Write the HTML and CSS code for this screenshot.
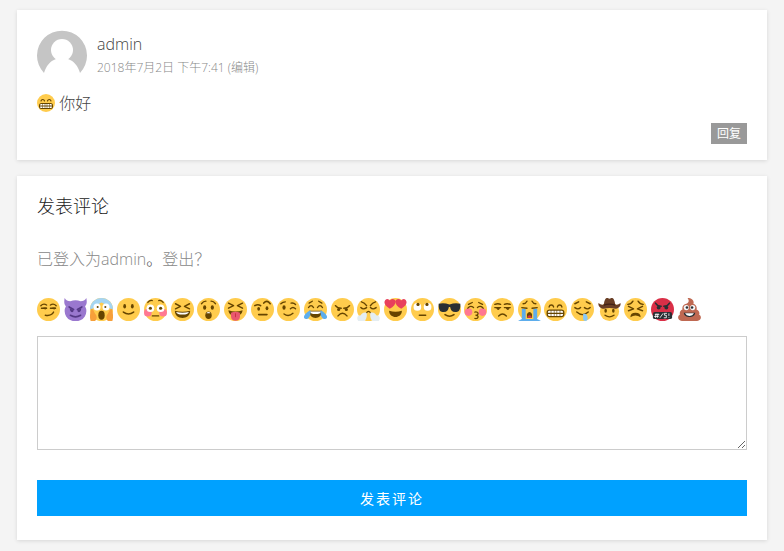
FILE: index.html
```html
<!DOCTYPE html>
<html lang="zh-CN">
<head>
  <meta charset="UTF-8" />
  <meta name="viewport" content="width=device-width, initial-scale=1.0" />
  <title>发表评论</title>
  <link rel="stylesheet" href="styles.css">
</head>
<body>
  <!-- Shared shapes -->
  <svg class="defs" aria-hidden="true">
    <symbol id="face" viewBox="0 0 36 36"><circle cx="18" cy="18" r="18" fill="#ffcc4d"/></symbol>
    <symbol id="grin" viewBox="0 0 36 36">
      <circle cx="18" cy="18" r="18" fill="#ffcc4d"/>
      <path d="M8 14c1-4 6-4 7 0M21 14c1-4 6-4 7 0" fill="none" stroke="#664500" stroke-width="2.2" stroke-linecap="round"/>
      <rect x="4" y="18" width="28" height="12" rx="5" fill="#664500"/>
      <path d="M8 20h20q2 0 2 3H6q0-3 2-3zM6 25h24q0 3-2 3H8q-2 0-2-3z" fill="#fff"/>
      <path d="M11 19v10M16 19v10M20 19v10M25 19v10" stroke="#664500" stroke-width="1"/>
    </symbol>
  </svg>

  <main class="content">
    <article class="card comment">
      <div class="comment-head">
        <svg class="avatar" viewBox="0 0 50 50" role="img" aria-label="admin">
          <path d="M7 43A25 25 0 1 1 43 43C41 36 37 31 31 29H19C13 31 9 36 7 43z" fill="#c5c5c5"/>
          <circle cx="25" cy="20" r="11" fill="#fff"/>
        </svg>
        <div class="comment-meta">
          <div class="author">admin</div>
          <div class="date"><time datetime="2018-07-02T19:41">2018年7月2日 下午7:41</time> <a href="#edit">(编辑)</a></div>
        </div>
      </div>
      <p class="comment-text"><svg class="emoji-inline" viewBox="0 0 36 36"><use href="#grin"/></svg> 你好</p>
      <div class="comment-actions"><a class="reply" href="#respond">回复</a></div>
    </article>

    <section class="card respond" id="respond">
      <h3>发表评论</h3>
      <form>
        <p class="logged-in"><a href="#profile">已登入为admin</a>。<a href="#logout">登出？</a></p>

        <div class="smilies">
          <button type="button" aria-label="smirk"><svg viewBox="0 0 36 36"><use href="#face"/><g fill="none" stroke="#664500" stroke-width="2.2" stroke-linecap="round"><path d="M6 12c3-3 6-3 9-1M21 11c3-2 6-2 9 1M7 16h8M21 16h8M13 27c6 1 11-1 13-5"/></g><path d="M10 15h5c0 4-4 4-5 0zM24 15h5c0 4-4 4-5 0z" fill="#664500"/></svg></button>
          <button type="button" aria-label="devil"><svg viewBox="0 0 36 36"><path d="M1 0c-1 6-1 10 2 13a17 16 0 1 0 30 0c3-3 3-7 2-13-2 4-5 5-9 5-5-2-11-2-16 0-4 0-7-1-9-5z" fill="#9a78cf"/><path d="M8 14l7 4M28 14l-7 4M10 27q8 5 16 0" fill="none" stroke="#553986" stroke-width="2.5" stroke-linecap="round"/><path d="M9 16l6 3c0 5-6 4-6-3zM27 16l-6 3c0 5 6 4 6-3z" fill="#553986"/></svg></button>
          <button type="button" aria-label="scream"><svg viewBox="0 0 36 36"><use href="#face"/><path d="M0 18a18 18 0 0 1 36 0c-8-2-11-8-18-11C11 10 8 16 0 18z" fill="#a5d5f2"/><circle cx="11" cy="14" r="5.5" fill="#fff"/><circle cx="25" cy="14" r="5.5" fill="#fff"/><circle cx="12" cy="14" r="1.6" fill="#664500"/><circle cx="24" cy="14" r="1.6" fill="#664500"/><ellipse cx="18" cy="27" rx="5" ry="7" fill="#664500"/><path d="M2 17c4 0 4 6 7 9 3 4 1 8-1 10H1c-2-6-1-13 1-19zM34 17c-4 0-4 6-7 9-3 4-1 8 1 10h7c2-6 1-13-1-19z" fill="#f7a03a"/></svg></button>
          <button type="button" aria-label="smile"><svg viewBox="0 0 36 36"><use href="#face"/><ellipse cx="12" cy="13" rx="2.2" ry="3.5" fill="#664500"/><ellipse cx="24" cy="13" rx="2.2" ry="3.5" fill="#664500"/><path d="M10 22q8 6 16 0" fill="none" stroke="#664500" stroke-width="2.5" stroke-linecap="round"/></svg></button>
          <button type="button" aria-label="flushed"><svg viewBox="0 0 36 36"><use href="#face"/><circle cx="6" cy="23" r="6" fill="#ff7892"/><circle cx="30" cy="23" r="6" fill="#ff7892"/><circle cx="10" cy="16" r="6" fill="#fff"/><circle cx="26" cy="16" r="6" fill="#fff"/><circle cx="10" cy="16" r="2.5" fill="#664500"/><circle cx="26" cy="16" r="2.5" fill="#664500"/><path d="M6 7q3-4 7-3M30 7q-3-4-7-3M13 28h10" fill="none" stroke="#664500" stroke-width="2" stroke-linecap="round"/></svg></button>
          <button type="button" aria-label="laughing"><svg viewBox="0 0 36 36"><use href="#face"/><path d="M7 9l8 4-8 4M29 9l-8 4 8 4" fill="none" stroke="#664500" stroke-width="2.2" stroke-linecap="round" stroke-linejoin="round"/><path d="M6 20q12 3 24 0c0 15-24 15-24 0z" fill="#664500"/><path d="M8 22q10 2 20 0-1 4-10 4T8 22z" fill="#fff"/></svg></button>
          <button type="button" aria-label="astonished"><svg viewBox="0 0 36 36"><use href="#face"/><ellipse cx="12" cy="15" rx="2.5" ry="3.5" fill="#664500"/><ellipse cx="24" cy="15" rx="2.5" ry="3.5" fill="#664500"/><path d="M7 9q3-4 7-4M29 9q-3-4-7-4" fill="none" stroke="#664500" stroke-width="2" stroke-linecap="round"/><ellipse cx="18" cy="27" rx="5" ry="6" fill="#664500"/><path d="M14.5 24q3.5-4 7 0z" fill="#fff"/></svg></button>
          <button type="button" aria-label="tongue"><svg viewBox="0 0 36 36"><use href="#face"/><path d="M7 8l8 4-8 4M29 8l-8 4 8 4" fill="none" stroke="#664500" stroke-width="2.2" stroke-linecap="round" stroke-linejoin="round"/><path d="M7 19q11 4 22 0c0 12-22 12-22 0z" fill="#664500"/><path d="M11 23q7-3 14 0v6c0 9-14 9-14 0z" fill="#e8596e"/><path d="M18 24v6" stroke="#be1931"/></svg></button>
          <button type="button" aria-label="raised eyebrow"><svg viewBox="0 0 36 36"><use href="#face"/><ellipse cx="12" cy="17" rx="2.2" ry="3" fill="#664500"/><ellipse cx="25" cy="16" rx="2.2" ry="3" fill="#664500"/><path d="M6 12q5-3 9 0M20 8q5-6 10 1M12 26h13" fill="none" stroke="#664500" stroke-width="2.5" stroke-linecap="round"/></svg></button>
          <button type="button" aria-label="wink"><svg viewBox="0 0 36 36"><use href="#face"/><ellipse cx="11" cy="15" rx="2.5" ry="3.5" fill="#664500"/><path d="M6 9q3-3 7-3M22 8q4-1 7 2M21 17q4-4 8 0M11 25q7 5 14-1" fill="none" stroke="#664500" stroke-width="2.2" stroke-linecap="round"/></svg></button>
          <button type="button" aria-label="joy"><svg viewBox="0 0 36 36"><use href="#face"/><path d="M7 15q4-6 8 0M21 15q4-6 8 0M8 8l5-3M28 8l-5-3" fill="none" stroke="#664500" stroke-width="2" stroke-linecap="round"/><path d="M8 20h20c0 15-20 15-20 0z" fill="#664500"/><path d="M9 21h18q-1 4-9 4t-9-4z" fill="#fff"/><path d="M10 19c1 9-2 14-7 14-6-1-3-9 7-14zM26 19c-1 9 2 14 7 14 6-1 3-9-7-14z" fill="#5dadec"/></svg></button>
          <button type="button" aria-label="angry"><svg viewBox="0 0 36 36"><use href="#face"/><path d="M7 12q3 4 9 4M29 12q-3 4-9 4M11 28q7-8 14 0" fill="none" stroke="#664500" stroke-width="2.3" stroke-linecap="round"/><circle cx="12" cy="18" r="2.5" fill="#664500"/><circle cx="24" cy="18" r="2.5" fill="#664500"/></svg></button>
          <button type="button" aria-label="triumph"><svg viewBox="0 0 36 36"><use href="#face"/><path d="M7 6q5 1 8 6M29 6q-5 1-8 6M6 15q4 4 9 0M21 15q4 4 9 0M15 23q3-4 6 0" fill="none" stroke="#664500" stroke-width="2.2" stroke-linecap="round"/><path d="M15 23c-6-1-8 2-9 4-6 0-7 5-4 9h10c3-3 4-8 3-13zM21 23c6-1 8 2 9 4 6 0 7 5 4 9H24c-3-3-4-8-3-13z" fill="#e4edf2"/></svg></button>
          <button type="button" aria-label="heart eyes"><svg viewBox="0 0 36 36"><use href="#face"/><path d="M9 17C1 12-1 7 2 3c3-3 6-1 7 1 3-4 9-3 9 2 0 4-3 8-9 11zM27 17c8-5 10-10 7-14-3-3-6-1-7 1-3-4-9-3-9 2 0 4 3 8 9 11z" fill="#e8405c"/><path d="M8 20q10 3 20 0c0 13-20 13-20 0z" fill="#664500"/></svg></button>
          <button type="button" aria-label="rolling eyes"><svg viewBox="0 0 36 36"><use href="#face"/><circle cx="10" cy="14" r="6" fill="#fff"/><circle cx="26" cy="14" r="6" fill="#fff"/><circle cx="11" cy="10" r="2.5" fill="#664500"/><circle cx="25" cy="10" r="2.5" fill="#664500"/><path d="M13 27h10" stroke="#664500" stroke-width="2.2" stroke-linecap="round"/></svg></button>
          <button type="button" aria-label="sunglasses"><svg viewBox="0 0 36 36"><use href="#face"/><path d="M1 9q8-2 17 1 9-3 17-1v4c-1 8-3 9-8 9-5 0-7-3-8-8h-2c-1 5-3 8-8 8-5 0-7-1-8-9z" fill="#292f33"/><path d="M11 26q7 5 14 0" fill="none" stroke="#664500" stroke-width="2.5" stroke-linecap="round"/></svg></button>
          <button type="button" aria-label="kissing"><svg viewBox="0 0 36 36"><use href="#face"/><circle cx="7" cy="22" r="6" fill="#ff7892"/><circle cx="29" cy="22" r="6" fill="#ff7892"/><path d="M6 16q4-5 9-1M21 15q5-4 9 1M7 10l6-3M29 10l-6-3M17 22c7-1 6 5 1 5 6 0 5 6-1 5" fill="none" stroke="#664500" stroke-width="2" stroke-linecap="round"/></svg></button>
          <button type="button" aria-label="unamused"><svg viewBox="0 0 36 36"><use href="#face"/><path d="M6 10q5-2 9 0M21 10q4-2 9 0M6 15h9M21 15h9M12 28q6-6 12 0" fill="none" stroke="#664500" stroke-width="2.2" stroke-linecap="round"/><path d="M8 15h6c0 5-5 5-6 0zM23 15h6c0 5-5 5-6 0z" fill="#664500"/></svg></button>
          <button type="button" aria-label="sob"><svg viewBox="0 0 36 36"><use href="#face"/><path d="M6 17h6v16h12V17h6v16l6 3H0l6-3z" fill="#5dadec"/><path d="M8 9q4 0 6-4M28 9q-4 0-6-4M6 15l8 1M30 15l-8 1" fill="none" stroke="#664500" stroke-width="2.2" stroke-linecap="round"/><path d="M14 25q4-6 8 0v6h-8z" fill="#664500"/><path d="M15 29q3-4 6 0v2h-6z" fill="#dd2e44"/></svg></button>
          <button type="button" aria-label="grin"><svg viewBox="0 0 36 36"><use href="#grin"/></svg></button>
          <button type="button" aria-label="drooling"><svg viewBox="0 0 36 36"><use href="#face"/><path d="M6 9l6-3M30 9l-6-3M6 15q5 4 9 0M21 15q5 4 9 0M9 22q9 8 18 0" fill="none" stroke="#664500" stroke-width="2.2" stroke-linecap="round"/><path d="M19 25c4-1 7 1 7 8 0 4-7 4-7 0z" fill="#88c9f9"/></svg></button>
          <button type="button" aria-label="cowboy"><svg viewBox="0 0 36 36"><circle cx="18" cy="21" r="15" fill="#ffcc4d"/><ellipse cx="12" cy="20" rx="2" ry="3" fill="#664500"/><ellipse cx="24" cy="20" rx="2" ry="3" fill="#664500"/><path d="M11 27q7 5 14 0" fill="none" stroke="#664500" stroke-width="2.2" stroke-linecap="round"/><path d="M1 8c3 3 6 3 8 2 1-7 3-10 5-10 2 0 2 1 4 1s2-1 4-1c2 0 4 3 5 10 2 1 5 1 8-2 2 4-4 9-8 9-6-2-12-2-18 0-4 0-10-5-8-9z" fill="#693e25"/><path d="M9 11q9-3 18 0" fill="none" stroke="#402116" stroke-width="2"/></svg></button>
          <button type="button" aria-label="persevere"><svg viewBox="0 0 36 36"><use href="#face"/><path d="M6 10q5 0 8-5M30 10q-5 0-8-5M7 13l8 4-8 3M29 13l-8 4 8 3" fill="none" stroke="#664500" stroke-width="2.2" stroke-linecap="round" stroke-linejoin="round"/><path d="M10 30q0-7 8-7t8 7q-8-5-16 0z" fill="#664500"/></svg></button>
          <button type="button" aria-label="cursing"><svg viewBox="0 0 36 36"><circle cx="18" cy="18" r="18" fill="#da2f47"/><path d="M7 8q3 5 9 5M29 8q-3 5-9 5" fill="none" stroke="#292f33" stroke-width="2.3" stroke-linecap="round"/><circle cx="12" cy="15" r="3" fill="#292f33"/><circle cx="24" cy="15" r="3" fill="#292f33"/><rect x="3" y="22" width="30" height="11" rx="3" fill="#292f33"/><path d="M8 24l-1 7M11 24l-1 7M6 26h7M5 29h7M19 24l-5 7M25 24h-4v3h3v4h-4M28 24v4M28 30v1" fill="none" stroke="#fff" stroke-width="1.3"/></svg></button>
          <button type="button" aria-label="poop"><svg viewBox="0 0 36 36"><path d="M15 0c7 0 11 5 9 9 5 2 6 6 5 9 5 2 5 6 4 8 5 3 3 10-3 10H6c-6 0-8-7-3-10-1-4 1-7 4-8-1-5 2-8 6-9 4-2 5-5 2-9z" fill="#bf6952"/><circle cx="13" cy="15" r="4" fill="#f5f8fa"/><circle cx="23" cy="15" r="4" fill="#f5f8fa"/><circle cx="14" cy="15" r="2" fill="#292f33"/><circle cx="22" cy="15" r="2" fill="#292f33"/><path d="M9 23h18c-1 9-17 9-18 0z" fill="#292f33"/><path d="M11 24h14q-2 4-7 4t-7-4z" fill="#fff"/></svg></button>
        </div>

        <textarea name="comment" aria-label="评论"></textarea>
        <button class="submit" type="submit">发表评论</button>
      </form>
    </section>
  </main>
</body>
</html>
```
FILE: styles.css
```css
* { box-sizing: border-box; }
body {
  margin: 0;
  background: #f4f4f4;
  color: #444;
  font-family: "Open Sans", "Noto Sans CJK SC", sans-serif;
  font-size: 16px;
  font-weight: 300;
  line-height: 24px;
}
a { color: inherit; text-decoration: none; }
p, h3 { margin: 0; }
.defs { position: absolute; width: 0; height: 0; }
.content {
  display: flex;
  flex-direction: column;
  gap: 16px;
  padding: 10px 17px;
}
.card {
  background: #fff;
  padding: 20px;
  box-shadow: 0 1px 4px rgba(0,0,0,0.12);
}

/* comment */
.comment { padding-bottom: 16px; }
.comment-head { display: flex; gap: 10px; }
.avatar { width: 50px; height: 50px; }
.comment-meta { padding-top: 2px; }
.date { color: #888; font-size: 12px; }
.comment-text { margin-top: 11px; }
.emoji-inline { width: 18px; height: 18px; vertical-align: -3px; }
.comment-actions {
  display: flex;
  justify-content: flex-end;
  margin-top: 8px;
}
.reply {
  padding: 0 6px;
  background: #999;
  color: #fff;
  font-size: 12px;
  font-weight: 400;
  line-height: 21px;
}

/* comment form */
.respond { padding-bottom: 24px; }
.respond h3 {
  color: #222;
  font-size: 18px;
  font-weight: 300;
  line-height: 20px;
}
.logged-in { margin-top: 31px; }
.logged-in a { color: #888; }
.smilies {
  display: flex;
  justify-content: space-between;
  max-width: 664px;
  margin-top: 27px;
}
.smilies button {
  width: 23px;
  height: 23px;
  padding: 0;
  border: none;
  background: none;
  cursor: pointer;
}
.smilies svg { display: block; width: 100%; }
textarea {
  display: block;
  width: 100%;
  height: 114px;
  margin-top: 15px;
  padding: 10px;
  border: 1px solid #ccc;
  font: inherit;
  resize: vertical;
}
.submit {
  display: block;
  width: 100%;
  height: 36px;
  margin-top: 30px;
  border: none;
  background: #00a1ff;
  color: #fff;
  font-family: inherit;
  font-size: 14px;
  letter-spacing: 2px;
  cursor: pointer;
}
.submit:hover { background: #0090e6; }
```
